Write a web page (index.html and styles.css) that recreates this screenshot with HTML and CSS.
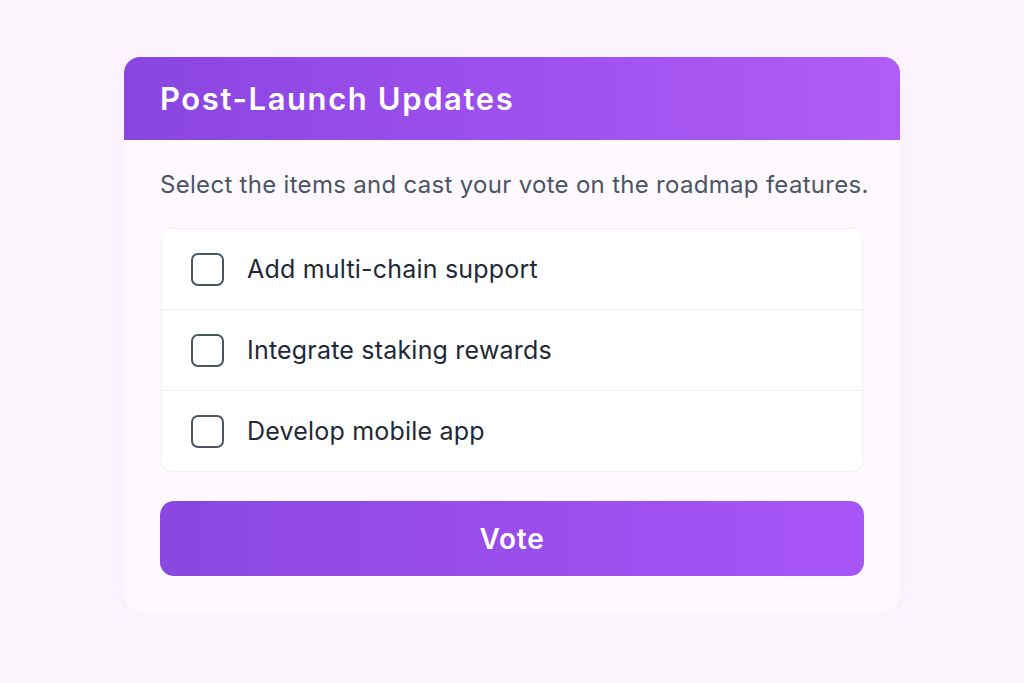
FILE: index.html
```html
<!DOCTYPE html>
<html lang="en">
<head>
    <meta charset="UTF-8">
    <meta name="viewport" content="width=device-width, initial-scale=1.0">
    <title>Post-Launch Updates</title>
    <link rel="stylesheet" href="styles.css">
</head>
<body>
    <!-- Voting Card -->
    <main class="card">
        <header class="card-header">
            <h1>Post-Launch Updates</h1>
        </header>

        <div class="card-body">
            <p class="intro">Select the items and cast your vote on the roadmap features.</p>

            <!-- Roadmap Options -->
            <ul class="options">
                <li class="option">
                    <label>
                        <input type="checkbox" class="check">
                        <span>Add multi-chain support</span>
                    </label>
                </li>
                <li class="option">
                    <label>
                        <input type="checkbox" class="check">
                        <span>Integrate staking rewards</span>
                    </label>
                </li>
                <li class="option">
                    <label>
                        <input type="checkbox" class="check">
                        <span>Develop mobile app</span>
                    </label>
                </li>
            </ul>

            <button class="vote-btn">Vote</button>
        </div>
    </main>
</body>
</html>
```

FILE: styles.css
```css
/* Global Styles */
body {
    font-family: Inter, "Noto Sans", Arial, sans-serif;
    margin: 0;
    padding: 57px 0 0;
    background-color: #fcf5fd; /* Pale lilac background */
    color: #1f2937;
}

.card {
    width: 776px;
    margin: 0 auto;
    background-color: #fdf9fe;
    border-radius: 16px;
    box-shadow: 0 4px 18px rgba(160, 90, 200, 0.06);
    overflow: hidden;
}

.card-header {
    height: 83px;
    display: flex;
    align-items: center;
    padding: 0 36px;
    background: linear-gradient(90deg, #8a45e1 0%, #a152ef 60%, #b15cf6 100%);
}

h1 {
    margin: 0;
    font-size: 31px;
    font-weight: 600;
    letter-spacing: 1.6px;
    color: #ffffff;
}

.card-body {
    padding: 30px 36px 35px;
}

.intro {
    margin: 0 0 28px;
    font-size: 24px;
    line-height: 30px;
    letter-spacing: 0.3px;
    white-space: nowrap;
    color: #4b5563;
}

.options {
    list-style: none;
    margin: 0 1px 29px;
    padding: 0;
    background-color: #ffffff;
    border: 1px solid #f1edf3;
    border-radius: 10px;
}

.option + .option {
    border-top: 1px solid #efecf1;
}

.option label {
    display: flex;
    align-items: center;
    gap: 23px;
    height: 80px;
    padding: 0 29px;
    font-size: 25px;
    letter-spacing: 0.2px;
    color: #1f2937;
    cursor: pointer;
}

.check {
    appearance: none;
    margin: 0;
    width: 33px;
    height: 33px;
    border: 2px solid #4b5563;
    border-radius: 7px;
    background-color: #ffffff;
    cursor: pointer;
}

.check:checked {
    background-color: #9b4fec;
    border-color: #9b4fec;
}

.vote-btn {
    display: block;
    width: 100%;
    height: 75px;
    border: none;
    border-radius: 14px;
    background: linear-gradient(90deg, #8a47e2 0%, #9a4deb 50%, #a855f7 100%);
    color: #ffffff;
    font-family: inherit;
    font-size: 28px;
    font-weight: 600;
    letter-spacing: 0.8px;
    cursor: pointer;
}

.vote-btn:hover {
    background: #8a47e2;
}
```
